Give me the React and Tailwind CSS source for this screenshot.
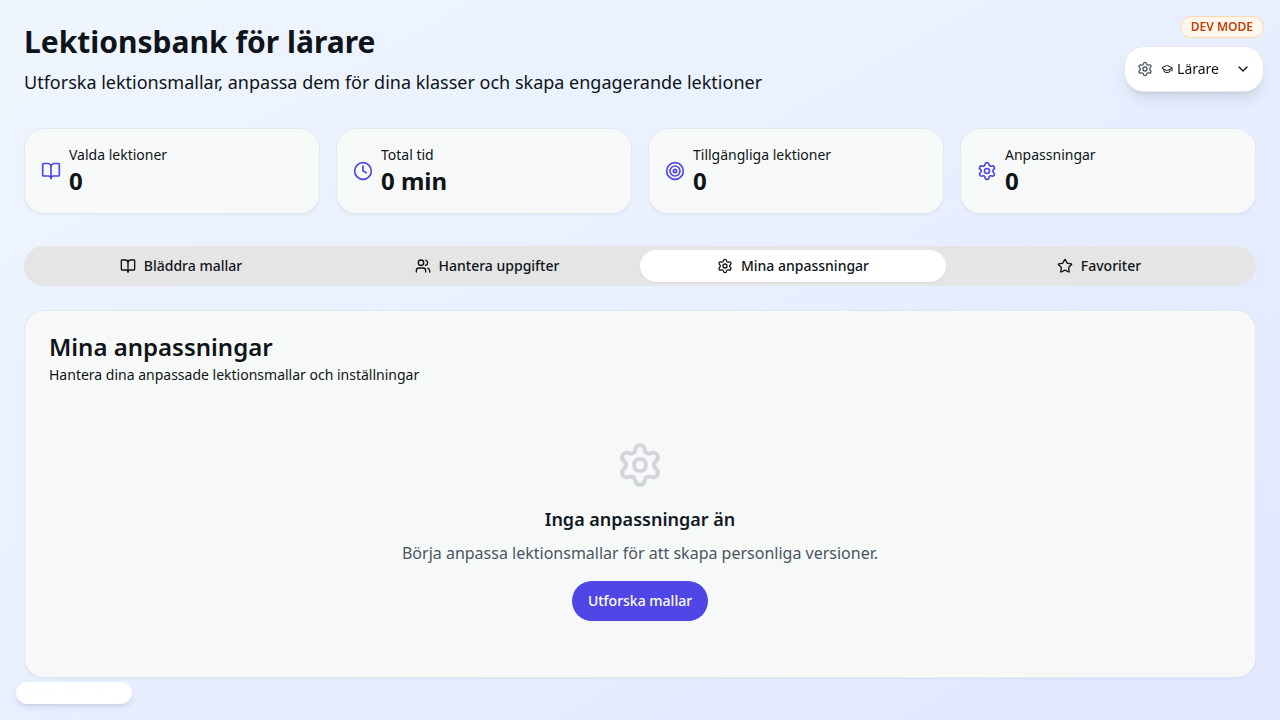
import React, { useState } from "react";
import { BookOpen, Clock, Target, Settings, Users, Star, ChevronDown, GraduationCap } from "lucide-react";

const stats = [
  { icon: BookOpen, label: "Valda lektioner", value: "0" },
  { icon: Clock, label: "Total tid", value: "0 min" },
  { icon: Target, label: "Tillgängliga lektioner", value: "0" },
  { icon: Settings, label: "Anpassningar", value: "0" },
];

const tabs = [
  { icon: BookOpen, label: "Bläddra mallar" },
  { icon: Users, label: "Hantera uppgifter" },
  { icon: Settings, label: "Mina anpassningar" },
  { icon: Star, label: "Favoriter" },
];

function StatCard({ icon: Icon, label, value }) {
  return (
    <div className="flex items-center gap-2 rounded-[20px] border border-[#e1e9f0] bg-[#f7f9f8] p-4 shadow-xs">
      <Icon className="size-5 shrink-0 text-[#4f46e5]" aria-hidden="true" />
      <div>
        <p className="text-sm">{label}</p>
        <p className="text-2xl font-bold">{value}</p>
      </div>
    </div>
  );
}

export default function App() {
  const [active, setActive] = useState(2);
  return (
    <div className="min-h-screen bg-linear-to-br/srgb from-[#eff6ff] to-[#e0e7ff] p-6 font-['Noto_Sans',sans-serif] text-[#0f1419]">
      <header className="mb-8">
        <h1 className="mb-2 text-3xl font-bold">Lektionsbank för lärare</h1>
        <p className="text-lg">
          Utforska lektionsmallar, anpassa dem för dina klasser och skapa engagerande lektioner
        </p>
      </header>

      <section className="mb-8 grid grid-cols-2 gap-4 md:grid-cols-4">
        {stats.map((s) => (
          <StatCard key={s.label} {...s} />
        ))}
      </section>

      <div role="tablist" className="mb-6 grid h-10 grid-cols-4 rounded-[20px] bg-[#e5e5e5] p-1">
        {tabs.map(({ icon: Icon, label }, i) => (
          <button
            key={label}
            type="button"
            role="tab"
            aria-selected={i === active}
            onClick={() => setActive(i)}
            className={
              i === active
                ? "flex items-center justify-center gap-2 rounded-[18px] bg-white px-3 text-sm font-medium shadow-xs"
                : "flex items-center justify-center gap-2 rounded-[18px] px-3 text-sm font-medium"
            }
          >
            <Icon className="size-4" aria-hidden="true" />
            {label}
          </button>
        ))}
      </div>

      <main className="rounded-[20px] border border-[#e1e9f0] bg-[#f7f9f8] p-6 shadow-xs">
        <h2 className="mb-1.5 text-2xl leading-6 font-semibold">Mina anpassningar</h2>
        <p className="text-sm">Hantera dina anpassade lektionsmallar och inställningar</p>
        <div className="flex flex-col items-center pt-14 pb-8 text-center">
          <Settings className="mb-4 size-12 text-[#d1d5db]" aria-hidden="true" />
          <h3 className="mb-2 text-lg font-semibold text-[#111827]">Inga anpassningar än</h3>
          <p className="mb-4 text-[#4b5563]">Börja anpassa lektionsmallar för att skapa personliga versioner.</p>
          <button type="button" className="h-10 rounded-[20px] bg-[#4f46e5] px-4 text-sm font-medium text-white">
            Utforska mallar
          </button>
        </div>
      </main>

      <div className="fixed top-4 right-4 flex flex-col items-end gap-2">
        <span className="rounded-full border border-[#fed7aa] bg-[#fff7ed] px-2.5 py-0.5 text-xs font-semibold text-[#c2410c]">
          DEV MODE
        </span>
        <button
          type="button"
          className="flex items-center gap-2 rounded-[20px] border border-gray-200 bg-white p-3 text-sm shadow-lg"
        >
          <Settings className="size-4 text-[#4b5563]" aria-hidden="true" />
          <span className="flex items-center gap-1">
            <GraduationCap className="size-3" aria-hidden="true" />
            Lärare
          </span>
          <ChevronDown className="ml-2 size-4" aria-hidden="true" />
        </button>
      </div>

      <div className="fixed bottom-4 left-4 flex items-center gap-1 rounded-full border border-white bg-white px-2.5 py-0.5 text-xs font-semibold text-[#fdfeff] shadow-md">
        <GraduationCap className="size-3" aria-hidden="true" />
        Undervisning
      </div>
    </div>
  );
}
